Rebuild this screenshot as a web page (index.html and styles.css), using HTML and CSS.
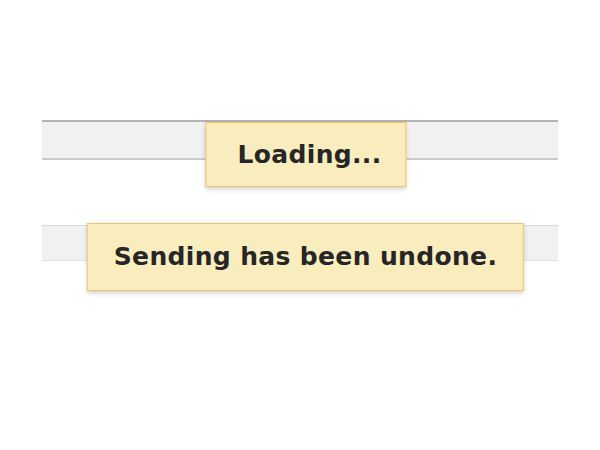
FILE: index.html
```
<!DOCTYPE html>
<html lang="en">
<head>
  <meta charset="UTF-8" />
  <title>Notices</title>
  <link rel="stylesheet" href="styles.css">
</head>
<body>
  <div class="page">
    <!-- loading notice over the toolbar -->
    <div class="strip strip-top">
      <div class="notice notice-loading">Loading...</div>
    </div>
    <!-- undo notice -->
    <div class="strip strip-bottom">
      <div class="notice notice-undo">Sending has been undone.</div>
    </div>
  </div>
</body>
</html>
```

FILE: styles.css
```
*{box-sizing:border-box;margin:0;padding:0}
body{background:#fff;font-family:'DejaVu Sans',Verdana,sans-serif;color:#222}
.page{width:600px;height:450px;padding:120px 42px 0}
/* grey strips */
.strip{position:relative;background:#f1f1f1}
.strip-top{height:40px;border-top:2px solid #b3b3b3;border-bottom:2px solid #cacaca}
.strip-bottom{height:36px;margin-top:65px;border-top:1px solid #d9d9d9;border-bottom:1px solid #e2e2e2}
/* yellow notices */
.notice{position:absolute;left:50%;transform:translateX(-50%);white-space:nowrap;background:#f9edbe;border:1px solid #f0c36d;box-shadow:0 2px 5px rgba(0,0,0,.2);font-size:25px;font-weight:700;letter-spacing:.35px;color:#262626}
.notice-loading{top:0;margin-left:6px;height:65px;line-height:64px;padding:0 24px 0 31px}
.notice-undo{top:-3px;margin-left:5px;height:68px;line-height:66px;padding:0 25px 0 26px}
```
